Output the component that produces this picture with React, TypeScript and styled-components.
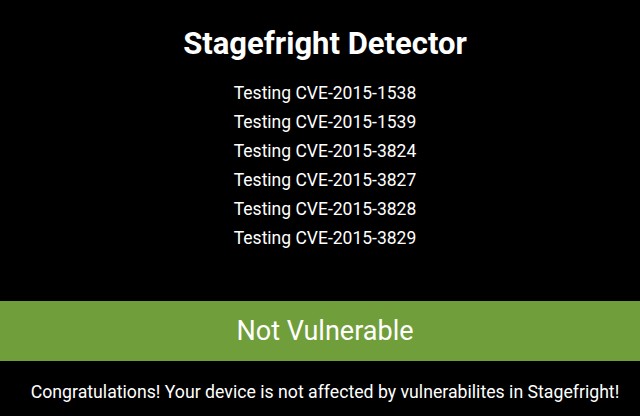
import React from "react";
import styled, { createGlobalStyle } from "styled-components";

const Global = createGlobalStyle`
  html, body { margin: 0; padding: 0; background: #000; }
  body { font-family: Roboto, "Noto Sans", sans-serif; color: #fff; }
`;

const Screen = styled.div`
  width: 640px;
  height: 416px;
  box-sizing: border-box;
  background: #000;
  display: flex;
  flex-direction: column;
  align-items: stretch;
  overflow: hidden;
`;

const Centered = styled.div`
  padding-left: 10px;
  display: flex;
  flex-direction: column;
  align-items: center;
`;

const Title = styled.h1`
  margin: 26px 0 0;
  font-size: 31px;
  line-height: 36px;
  font-weight: 700;
  text-align: center;
`;

const TestList = styled.ul`
  list-style: none;
  margin: 17px 0 0;
  padding: 0;
  display: flex;
  flex-direction: column;
  align-items: center;
`;

const TestItem = styled.li`
  font-size: 17.5px;
  line-height: 29px;
`;

const Banner = styled.div`
  margin-top: 48px;
  height: 60px;
  padding-left: 10px;
  background: #709e3a;
  display: flex;
  align-items: center;
  justify-content: center;
  font-size: 27px;
`;

const Message = styled.p`
  margin: 0;
  padding: 7px 0 0 10px;
  flex: 1;
  display: flex;
  align-items: center;
  justify-content: center;
  font-size: 17.7px;
  white-space: nowrap;
`;

const cves = ["1538", "1539", "3824", "3827", "3828", "3829"];

export default function App() {
  return (
    <>
      <Global />
      <Screen>
        <Centered>
          <Title>Stagefright Detector</Title>
          <TestList>
            {cves.map((c) => (
              <TestItem key={c}>Testing CVE-2015-{c}</TestItem>
            ))}
          </TestList>
        </Centered>
        <Banner>Not Vulnerable</Banner>
        <Message>Congratulations! Your device is not affected by vulnerabilites in Stagefright!</Message>
      </Screen>
    </>
  );
}
